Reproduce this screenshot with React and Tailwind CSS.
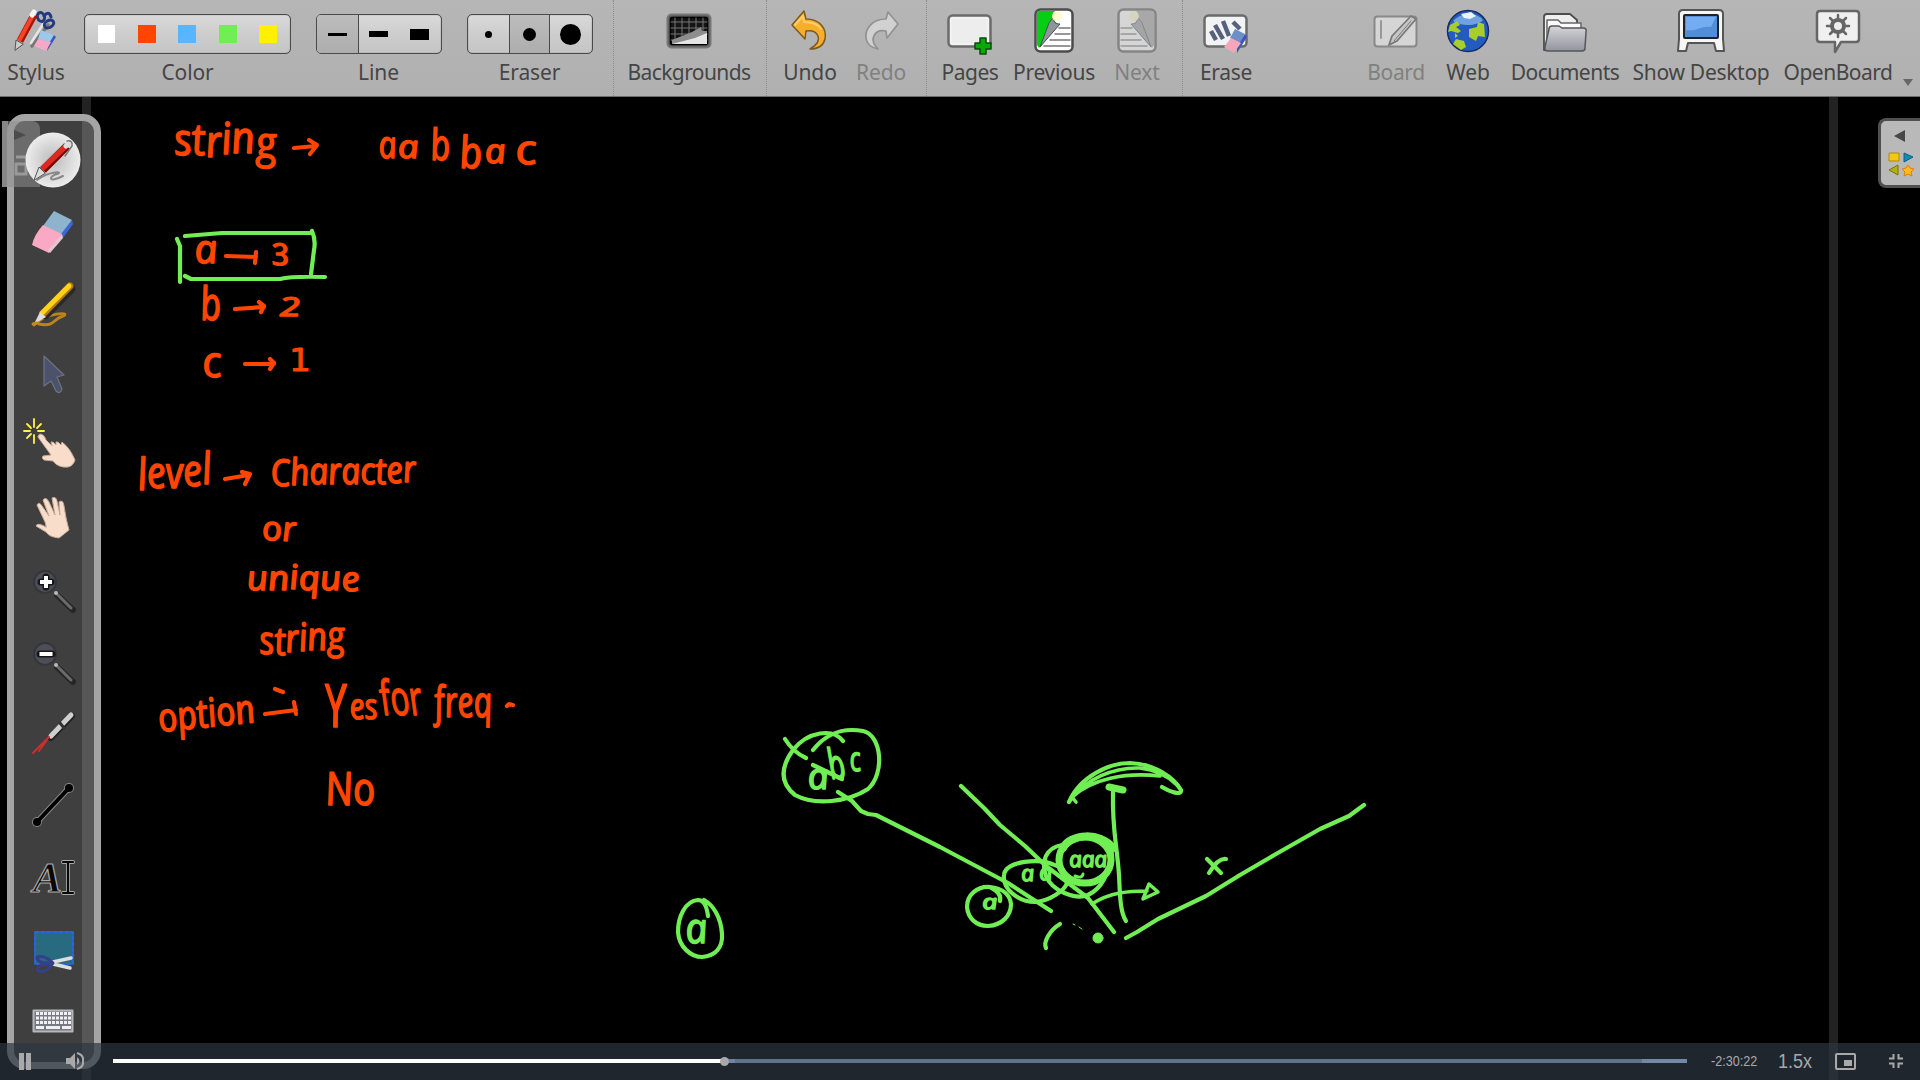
import React from "react";

const LABEL = "font-['Noto_Sans','Open_Sans',sans-serif]";

function Tool({ label, width, dim, tracking = "tracking-[-0.12px]", children }) {
  return (
    <div className={`flex h-full shrink-0 flex-col items-center ${dim ? "opacity-45" : ""}`} style={{ width }}>
      <div className="mt-[7px] flex h-12 items-center justify-center">{children}</div>
      <div className={`mt-[3px] whitespace-nowrap text-[21px] leading-[28px] text-[#454545] ${LABEL} ${tracking}`}>{label}</div>
    </div>
  );
}

const Separator = ({ gap = "" }) => <div className={`h-full w-0 shrink-0 border-l border-dotted border-[#8c8c8c] ${gap}`} />;

const Icon = ({ children, size = "size-12" }) => (
  <svg viewBox="0 0 48 48" className={`${size} shrink-0 overflow-visible`} fill="none" strokeLinecap="round" strokeLinejoin="round">
    {children}
  </svg>
);

const Group = ({ children, width }) => (
  <div
    className={`flex h-10 overflow-hidden rounded-[5px] border border-[#4a4a4a] bg-linear-to-b from-[#dadada] via-[#cdcdcd] to-[#c5c5c5] shadow-[inset_0_0_1px_#555] ${width}`}
  >
    {children}
  </div>
);

const StylusIcon = () => (
  <Icon>
    <path d="M36 18 L20 39" stroke="#777" strokeWidth="3.500" />
    <path d="M33 14 L19 36" stroke="#e5e5e5" strokeWidth="2.500" />
    <g strokeWidth="3" stroke="#24397e">
      <ellipse cx="29" cy="10" rx="3.500" ry="4.500" transform="rotate(-20 29 10)" />
      <ellipse cx="37" cy="17" rx="5" ry="3.500" transform="rotate(-30 37 17)" />
      <path d="M32 9 Q37 3 39 10" />
    </g>
    <path d="M22 8 L8 34" stroke="#a91500" strokeWidth="7" strokeLinecap="butt" />
    <path d="M21 8 L7 34" stroke="#f4442a" strokeWidth="4" strokeLinecap="butt" />
    <path d="M22 5 L20 8" stroke="#f4f4f4" strokeWidth="5" />
    <path d="M3 43 L4 33 L11 37 Z" fill="#ccc" stroke="#555" />
    <path d="M29 23 L42 28 L39 35 L26 32 Z" fill="#9ec8ea" />
    <path d="M42 28 L44 30 L35 44 L36 38 Z" fill="#3858c8" />
    <path d="M26 32 L39 35 L34 44 L22 39 Z" fill="#f5a9c7" />
  </Icon>
);

const BackgroundIcon = () => (
  <Icon>
    <rect x="2.5" y="7.5" width="43" height="33" rx="4" fill="#555" stroke="#777" strokeWidth="2" />
    <rect x="5.5" y="10.500" width="37" height="27" rx="2" fill="#151515" stroke="#000" strokeWidth="1.5" />
    <path d="M10 11V36M17 11V36M24 11V36M31 11V36M38 11V36M6 15H42M6 21H42M6 27H42M6 33H42" stroke="#777" strokeWidth="1" />
    <path d="M7 33 L27 25 L36 20 L37 24 L42 24 V37 H7 Z" fill="#8d8d8d" />
    <path d="M7 37 L30 31 L42 26 V37 Z" fill="#e5e5e5" />
  </Icon>
);

const UndoIcon = () => (
  <Icon>
    <path d="M6 18 L18 4 L20 12 C34 12 41 22 39 32 C37 40 31 42 24 42 C31 38 34 34 32 29 C30 24 26 23 20 24 L19 32 Z" fill="#f7ae2b" stroke="#7b5b20" strokeWidth="1.5" />
    <path d="M9 18 L17 9 L18 15 C26 15 32 17 35 22" stroke="#ffce6c" strokeWidth="2" />
  </Icon>
);

const RedoIcon = () => (
  <Icon>
    <path d="M41 17 L31 5 L29 12 C15 12 8 22 9 31 C10 38 16 41 21 42 C16 37 15 33 17 29 C19 24 23 23 29 24 L30 31 Z" fill="#f4f4f4" stroke="#696969" strokeWidth="1.7" />
  </Icon>
);

const PagesIcon = () => (
  <Icon>
    <rect x="2.500" y="8.500" width="42" height="31" rx="4" fill="#f2f2f2" stroke="#6b6b6b" strokeWidth="2.500" />
    <rect x="6" y="12" width="35" height="24" rx="1" fill="#ededed" />
    <path d="M34 31h6v5h5v6h-5v5h-6v-5h-5v-6h5z" fill="#09a909" stroke="#064e06" strokeWidth="1.500" />
  </Icon>
);

const TurnedPageIcon = ({ mirrored, accent }) => (
  <Icon>
    <g transform={mirrored ? "matrix(-1 0 0 1 48 0)" : undefined}>
      <rect x="5.500" y="2.500" width="37" height="42" rx="5" fill="#fff" stroke="#4c4c4c" strokeWidth="2.500" />
      <path d="M8 4 H25 C21 8 23 14 28 17 L9 41 L7 38 V6 Z" fill={accent} />
      <path d="M24 10 C23 15 25 17 30 17 L10 40 L19 16 Z" fill="#8f959b" stroke="#4a4f55" strokeWidth="1" />
      <path d="M24 5 C20 9 23 15 28 14 C33 14 34 6 29 4 Z" fill="#fffbd0" />
      <path d="M29 21H40M25 27H40M20 33H40M14 39H40" stroke="#777" strokeWidth="1.500" />
    </g>
  </Icon>
);

const EraseIcon = () => (
  <Icon>
    <rect x="2.500" y="8.500" width="42" height="31" rx="4" fill="#f1f3f5" stroke="#6b6b6b" strokeWidth="2.500" />
    <path d="M9 24 L14 33 M13 18 L21 32 M21 14 L27 29 M31 15 L38 22" stroke="#56617c" strokeWidth="4.500" strokeLinecap="butt" />
    <path d="M33 22 L43 27 L38 36 L28 31 Z" fill="#6d8fc6" />
    <path d="M43 27 L45 30 L35 46 L35 40 Z" fill="#3b57bb" />
    <path d="M29 31 L39 36 L32 46 L22 40 Z" fill="#f4a6bb" />
  </Icon>
);

const BoardIcon = () => (
  <Icon>
    <rect x="2.500" y="9.500" width="42" height="30" rx="3" fill="#fff" stroke="#555" strokeWidth="2" />
    <path d="M9 14V31" stroke="#777" strokeWidth="2" />
    <path d="M39 9 L44 12 L25 34 L17 38 L20 29 Z" fill="#ddd" stroke="#333" strokeWidth="1.800" />
    <path d="M39 14 L22 34" stroke="#333" />
  </Icon>
);

const WebIcon = () => (
  <Icon>
    <circle cx="24" cy="24" r="20.500" fill="#245bc0" stroke="#182d5e" strokeWidth="1.500" />
    <path d="M9 14 C17 6 31 4 39 13 C33 19 18 20 9 14Z" fill="#6fa2e0" />
    <path d="M17 7 L27 5 L32 9 L26 12 L20 11 Z" fill="#e9f4fb" />
    <path d="M6 18 L13 14 L16 18 L12 20 L17 24 L14 26 L7 24 L4 25 Z M12 32 L20 34 L22 40 L17 43 L9 37 Z M25 22 L33 20 L34 15 L40 17 L41 30 L34 29 L32 34 L25 30 Z M11 26 L14 29 L11 31Z" fill="#a8ce2d" />
  </Icon>
);

const DocumentsIcon = () => (
  <Icon>
    <defs>
      <linearGradient id="folder" x1="0" y1="0" x2="0" y2="1"><stop offset="0" stopColor="#d5d5da" /><stop offset="1" stopColor="#93949c" /></linearGradient>
    </defs>
    <path d="M3 43 V10 Q3 7 6 7 H29 L36 13 V43 Z" fill="#eee" stroke="#4d4d4d" strokeWidth="1.800" />
    <path d="M6 43 V13 H17 L20 16 H40 V24" fill="#fafafa" stroke="#666" strokeWidth="1.500" />
    <path d="M8 22 Q8 19 11 19 H18 L21 21 H42 Q46 21 45 25 L44 41 Q44 44 41 44 H7 Q3 44 4 40 Z" fill="url(#folder)" stroke="#55565c" strokeWidth="1.500" />
  </Icon>
);

const DesktopIcon = () => (
  <Icon>
    <path d="M2 7 Q2 3 6 3 H42 Q46 3 46 7 V32 L47 44 H39 L37 36 H11 L9 44 H1 L2 32 Z" fill="#f6f6f6" stroke="#555" strokeWidth="2" />
    <rect x="7" y="8" width="34" height="23" rx="1" fill="#528ed8" stroke="#222" strokeWidth="2" />
    <path d="M9 10 H39 L34 20 C24 18 20 25 9 23 Z" fill="#73acf0" />
  </Icon>
);

const OpenBoardIcon = () => (
  <Icon>
    <path d="M6 4 H42 Q45 4 45 7 V32 Q45 35 42 35 H27 L21 45 V35 H6 Q3 35 3 32 V7 Q3 4 6 4 Z" fill="#f0f0f0" stroke="#666" strokeWidth="2.500" />
    <path d="M24 8V30M13 19H35M16 11L32 27M32 11L16 27" stroke="#666" strokeWidth="2.500" />
    <circle cx="24" cy="19" r="6" fill="#eee" stroke="#666" strokeWidth="4" />
  </Icon>
);

function Toolbar() {
  return (
    <header className="flex h-[97px] w-full items-start border-b border-[#6d6d6d] bg-linear-to-b from-[#b6b6b6] to-[#b0b0b0]">
      <Tool label="Stylus" width={72}><StylusIcon /></Tool>
      <Tool label="Color" width={231}>
        <div className="mt-[6px]">
          <Group width="w-[207px] items-center justify-between px-[13px]">
            <div className="h-[18px] w-[17px] bg-white" />
            <div className="h-[18px] w-[18px] bg-[#ff4500]" />
            <div className="h-[18px] w-[18px] bg-[#5ab5ff]" />
            <div className="h-[18px] w-[18px] bg-[#72ee55]" />
            <div className="h-[18px] w-[18px] bg-[#fff000]" />
          </Group>
        </div>
      </Tool>
      <Tool label="Line" width={151}>
        <div className="mt-[6px]">
          <Group width="w-[126px]">
            <div className="flex w-[42px] items-center justify-center border-r border-[#4a4a4a] bg-linear-to-b from-[#bdbdbd] to-[#adadad]"><div className="h-[3px] w-[19px] bg-black" /></div>
            <div className="flex w-[40px] items-center justify-center"><div className="h-[6px] w-[19px] bg-black" /></div>
            <div className="flex w-[42px] items-center justify-center"><div className="h-[11px] w-[19px] bg-black" /></div>
          </Group>
        </div>
      </Tool>
      <Tool label="Eraser" width={151}>
        <div className="mt-[6px]">
          <Group width="w-[126px]">
            <div className="flex w-[41px] items-center justify-center"><div className="size-[7px] rounded-full bg-black" /></div>
            <div className="flex w-[41px] items-center justify-center border-x border-[#4a4a4a] bg-linear-to-b from-[#bdbdbd] to-[#adadad]"><div className="size-[13px] rounded-full bg-black" /></div>
            <div className="flex w-[41px] items-center justify-center"><div className="size-[21px] rounded-full bg-black" /></div>
          </Group>
        </div>
      </Tool>
      <Separator gap="ml-2" />
      <Tool label="Backgrounds" width={150} tracking="tracking-[-0.6px]"><BackgroundIcon /></Tool>
      <Separator gap="ml-[2px]" />
      <Tool label="Undo" width={86}><UndoIcon /></Tool>
      <Tool label="Redo" width={56} dim><RedoIcon /></Tool>
      <Separator gap="ml-[17px]" />
      <Tool label="Pages" width={86} tracking="tracking-[-0.5px]"><PagesIcon /></Tool>
      <Tool label="Previous" width={82} tracking="tracking-[-0.3px]"><TurnedPageIcon accent="#04cf14" /></Tool>
      <Tool label="Next" width={84} dim><TurnedPageIcon mirrored accent="#999" /></Tool>
      <Separator gap="ml-[3px]" />
      <Tool label="Erase" width={86} tracking="tracking-[-0.3px]"><EraseIcon /></Tool>
      <div className="w-[95px]" />
      <Tool label="Board" width={64} dim tracking="tracking-[-0.4px]"><BoardIcon /></Tool>
      <Tool label="Web" width={80}><WebIcon /></Tool>
      <Tool label="Documents" width={114} tracking="tracking-[-0.5px]"><DocumentsIcon /></Tool>
      <Tool label="Show Desktop" width={158} tracking="tracking-[-0.3px]"><DesktopIcon /></Tool>
      <Tool label="OpenBoard" width={116} tracking="tracking-[-0.5px]"><OpenBoardIcon /></Tool>
      <div className="ml-[7px] mt-[79px] h-0 w-0 border-x-[5px] border-t-[7px] border-x-transparent border-t-[#666]" />
    </header>
  );
}

/* Pen lettering: a single-storey italic face, made upright again and fitted to its width. */
function Ink({ x, y, w, size = 40, turn = 0, skew = 8, thick = 1.5, dy, font = "font-['Open_Sans','Noto_Sans',sans-serif] italic", children }) {
  return (
    <text
      transform={`translate(${x} ${y}) rotate(${turn}) skewX(${skew})`}
      textLength={w}
      lengthAdjust="spacingAndGlyphs"
      fontSize={size}
      strokeWidth={thick}
      dy={dy}
      className={font}
    >
      {children}
    </text>
  );
}

function Whiteboard() {
  return (
    <svg viewBox="0 97 1920 983" className="absolute inset-x-0 top-[97px] h-[983px] w-[1920px]" strokeLinecap="round" strokeLinejoin="round">
      <g fill="#ff4500" stroke="#ff4500">
        <Ink x={176} y={155} w={102} size={44} dy="0 0 2 -3 -1 5">string</Ink>
        <Ink x={380} y={158} w={18} size={38}>a</Ink>
        <Ink x={399} y={158} w={21} size={32}>a</Ink>
        <Ink x={432} y={160} w={20} size={43}>b</Ink>
        <Ink x={461} y={168} w={23} size={44}>b</Ink>
        <Ink x={486} y={163} w={21} size={34}>a</Ink>
        <Ink x={517} y={164} w={21} size={41}>c</Ink>
        <Ink x={196} y={263} w={23} size={40}>a</Ink>
        <Ink x={273} y={265} w={18} size={30} skew={12}>3</Ink>
        <Ink x={202} y={320} w={21} size={46}>b</Ink>
        <Ink x={280} y={316} w={21} size={26} skew={6}>2</Ink>
        <Ink x={204} y={377} w={19} size={43}>c</Ink>
        <Ink x={289} y={371} w={22} size={32} skew={0} thick={0.8} font="font-['DejaVu_Sans',sans-serif]">1</Ink>
        <Ink x={139} y={489} w={75} size={44} dy="1 -2 0 -2 -2">level</Ink>
        <Ink x={272} y={486} w={146} size={37} dy="0 -1 -1 0 0 0 0 -1 -1">Character</Ink>
        <Ink x={263} y={540} w={34} size={34} turn={2}>or</Ink>
        <Ink x={248} y={590} w={113} size={34} dy="0 0 -1 1 0 1">unique</Ink>
        <Ink x={261} y={654} w={86} size={39} dy="0 1 -3 -1 -1 -1">string</Ink>
        <Ink x={161} y={732} w={97} size={40} turn={-6}>option</Ink>
        <Ink x={327} y={727} w={22} size={60}>Y</Ink>
        <Ink x={351} y={719} w={28} size={36}>es</Ink>
        <Ink x={382} y={715} w={42} size={48} font="font-['Open_Sans',sans-serif]">for</Ink>
        <Ink x={436} y={717} w={58} size={43}>freq</Ink>
        <Ink x={327} y={805} w={50} size={46}>No</Ink>
      </g>
      <g fill="none" stroke="#ff4500" strokeWidth="4.200">
        <path d="M294 148 L316 146 M309 140 L317 145 L310 154" />
        <path d="M226 256 L256 257 M256 252 L255 263" />
        <path d="M235 309 L264 307 M259 302 L264 306 L261 312" />
        <path d="M245 364 L274 364 M270 359 L274 363 L270 369" />
        <path d="M225 479 L249 475 M242 472 L250 474 L245 484" />
        <path d="M265 714 L296 710 M294 702 L296 714 M275 689 L283 692" />
        <path d="M507 706 L509 704 L513 705" />
      </g>
      <g fill="none" stroke="#72ee55" strokeWidth="4.200">
        <path d="M177 239 L180 246 V282" />
        <path d="M185 236 L222 233 H312 M312 231 Q316 240 314 250 L311 274 M185 276 L191 279 H280 Q292 276 325 277" />
        <path d="M843 741 C833 728 808 731 793 750 C780 768 780 783 795 795 C815 806 848 802 868 789 C885 774 882 735 863 731 C840 727 825 735 813 750" />
        <path d="M785 739 Q793 752 806 758 M813 765 L842 779" />
        <path d="M838 792 L852 801 L861 811 L868 814 L876 815 L940 847 L1008 883 L1051 911" />
        <path d="M961 786 L984 808 L1000 825 L1025 846 L1046 866 L1088 898 L1114 932" />
        <path d="M708 916 Q706 900 698 900 C685 901 678 917 678 932 C679 947 691 957 702 957 C715 956 723 948 722 934 C721 917 713 905 704 900" />
        <path d="M1000 901 Q1002 893 990 887 C977 886 967 895 967 907 C968 918 976 926 988 926 C1002 925 1011 916 1011 904 C1010 895 1003 888 990 887" />
        <path d="M1057 866 C1040 857 1005 861 1004 875 C1002 890 1020 902 1035 902 C1050 901 1065 890 1067 883" />
        <path d="M1062 845 C1045 848 1041 862 1046 876 C1052 891 1075 900 1088 895 C1103 888 1110 870 1112 850" />
        <ellipse cx="1085" cy="860" rx="26" ry="23" strokeWidth="7" />
        <path d="M1063 848 C1070 834 1100 831 1113 848" strokeWidth="8" />
        <path d="M1075 876 Q1082 879 1083 874" strokeWidth="3" />
        <path d="M1069 802 C1080 776 1110 763 1130 763 C1155 764 1174 778 1181 790 C1182 796 1170 792 1162 787" />
        <path d="M1069 802 C1085 778 1115 767 1140 768 C1158 770 1170 778 1177 785 M1076 802 L1072 797 C1092 779 1125 772 1160 776" strokeWidth="3.600" />
        <path d="M1109 787 L1123 790" strokeWidth="7" />
        <path d="M1113 792 C1112 830 1117 845 1119 875 C1120 895 1120 912 1126 921" />
        <path d="M1126 938 L1137 932 L1158 919 L1206 896 L1240 875 L1276 854 L1320 829 L1349 816 L1364 805" />
        <path d="M1207 859 L1221 873 M1226 859 Q1218 858 1209 873" />
        <path d="M1092 904 C1110 892 1130 891 1147 891 M1149 884 L1158 892 L1143 899 Z" strokeWidth="3.500" />
        <path d="M1060 924 C1050 930 1043 942 1046 948" />
        <circle cx="1098" cy="938" r="5" fill="#72ee55" strokeWidth="1" />
        <path d="M1073 924 L1075 925 M1079 927 L1082 929" strokeWidth="1" />
      </g>
      <g fill="#72ee55" stroke="#72ee55">
        <Ink x={687} y={943} w={22} size={42}>a</Ink>
        <Ink x={809} y={789} w={21} size={36}>a</Ink>
        <Ink x={832} y={779} w={17} size={42} skew={18}>b</Ink>
        <Ink x={851} y={771} w={11} size={34}>c</Ink>
        <Ink x={983} y={909} w={15} size={20}>a</Ink>
        <Ink x={1022} y={881} w={13} size={22}>a</Ink>
        <Ink x={1040} y={880} w={13} size={22}>a</Ink>
        <Ink x={1070} y={867} w={38} size={22}>aaa</Ink>
      </g>
    </svg>
  );
}

const SideTool = ({ children }) => (
  <div className="relative flex h-[71.75px] w-full shrink-0 items-center justify-center">{children}</div>
);

/* The left drawer handle, seen through the translucent tool palette. */
const DrawerHandle = () => (
  <div className="absolute left-[2px] top-[121px] h-[66px] w-[38px] rounded-tr-[8px] bg-[#8f8f8f]/55">
    <svg viewBox="0 0 38 66" className="h-full w-full">
      <path d="M12 9 L24 14 L12 19 Z" fill="#4b4b4b" />
      <path d="M14 36 H30 M14 43 H24 V53 H14 Z M30 43 V53" fill="none" stroke="#999" strokeWidth="3" />
    </svg>
  </div>
);

function Sidebar() {
  return (
    <>
      <div className="absolute left-[2px] top-[121px] h-[66px] w-[6px] bg-[#7c7c7c]" />
      <div className="absolute left-[7px] top-[114px] h-[955px] w-[94px] rounded-[18px] border-[7px] border-[#a5a5a5] bg-linear-to-r from-[#3f3f3f] from-85% to-[#575757] to-85%" />
      <DrawerHandle />
      <aside className="absolute left-[7px] top-[114px] flex h-[955px] w-[94px] flex-col pl-[7px] pr-[9px] pt-[10px]">
        <SideTool>
          <svg viewBox="0 0 56 56" className="size-14 shrink-0" strokeLinecap="round">
            <defs>
              <radialGradient id="disc"><stop offset="0" stopColor="#bcbcbc" /><stop offset="1" stopColor="#ececec" /></radialGradient>
            </defs>
            <circle cx="28" cy="28" r="27.500" fill="url(#disc)" />
            <path d="M12 48 C26 38 39 40 32 42 C24 44 22 52 38 44" fill="none" stroke="#888" strokeWidth="2" />
            <path d="M18 38 L42 14" stroke="#6f0808" strokeWidth="8" strokeLinecap="butt" />
            <path d="M17 37 L41 14" stroke="#df2820" strokeWidth="5.500" strokeLinecap="butt" />
            <path d="M41 14 L45 11" stroke="#ddd" strokeWidth="5" />
            <path d="M42 9 Q48 8 47 14 L40 24" fill="none" stroke="#777" strokeWidth="1.500" />
            <path d="M9 48 L14 35 L20 41 Z" fill="#ddd" stroke="#555" />
          </svg>
        </SideTool>
        <SideTool>
          <Icon>
            <path d="M25 3 L43 12 L33 27 L14 18 Z" fill="#8fb3cc" />
            <path d="M43 12 L44 16 L34 30 L32 26 Z" fill="#3c66de" />
            <path d="M14 17 L33 26 L20 45 L3 37 Q5 27 14 17 Z" fill="#f9a9c3" />
            <path d="M33 26 L34 30 L21 45 L19 42 Z" fill="#e7c5cf" />
          </Icon>
        </SideTool>
        <SideTool>
          <Icon>
            <path d="M5 46 C17 33 43 33 34 37 C23 40 27 48 10 45" stroke="#bd8419" strokeWidth="3" />
            <path d="M42 10 L16 36" stroke="#292929" strokeWidth="9" />
            <path d="M41 7 L14 35" stroke="#b47a06" strokeWidth="7" />
            <path d="M40 7 L13 34" stroke="#ffd313" strokeWidth="5" />
            <path d="M5 45 L11 33 L17 38 Z" fill="#ddd" />
            <path d="M4 45 L8 44" stroke="#c78b16" strokeWidth="3" />
          </Icon>
        </SideTool>
        <SideTool>
          <Icon>
            <path d="M15 5 L35 24 L28 26 L33 38 Q31 44 27 40 L22 30 L15 35 Z" fill="#4b5269" stroke="#6c7386" strokeWidth="1.200" />
          </Icon>
        </SideTool>
        <SideTool>
          <Icon>
            <path d="M5 -2V6M5 -18V-10M-5 -6H1M9 -6H15M-2 -13L2 -9M12 -13L8 -9M-2 1L2 -3" stroke="#fff347" strokeWidth="1.800" transform="translate(0 14)" />
            <path d="M11 11 Q15 11 17 17 L23 23 L22 19 Q24 18 27 22 L27 19 Q29 18 32 22 L33 19 Q41 25 46 37 Q44 43 39 44 Q29 45 24 38 L15 37 Q12 35 14 33 L22 32 L9 14 Z" fill="#f8ddca" stroke="#c6aa98" />
          </Icon>
        </SideTool>
        <SideTool>
          <Icon>
            <path d="M16 27 L8 10 Q10 6 13 11 L20 21 L14 5 Q17 1 20 7 L26 20 L23 3 Q27 1 28 6 L31 20 L30 7 Q34 4 35 11 Q37 25 40 35 L30 43 Q20 42 17 37 L7 31 Q8 27 17 32 Z" fill="#f8ddca" stroke="#c6aa98" />
          </Icon>
        </SideTool>
        {["in", "out"].map((kind) => (
          <SideTool key={kind}>
            <Icon>
              <circle cx="16" cy="16" r="11" fill="#4d4e56" stroke="#34363e" strokeWidth="2" />
              <path d="M28 29 L44 44" stroke="#262626" strokeWidth="6" />
              <path d="M28 28 L42 42" stroke="#6a6a6a" strokeWidth="3" />
              <circle cx="27" cy="27" r="2" fill="#b8b8b8" />
              <path d={kind === "in" ? "M17 11V21M12 16H22" : "M11 16H23"} stroke="#161616" strokeWidth="7" />
              <path d={kind === "in" ? "M17 10V22M11 16H23" : "M10.500 16H23.500"} stroke="#fff" strokeWidth="4" strokeLinecap="butt" />
            </Icon>
          </SideTool>
        ))}
        <SideTool>
          <Icon>
            <path d="M43 6 L22 28" stroke="#222" strokeWidth="6" />
            <path d="M42 5 L22 26" stroke="#cfcfcf" strokeWidth="5" />
            <path d="M31 13 L35 18" stroke="#333" strokeWidth="3" />
            <path d="M20 27 L4 43 M18 30 L10 41" stroke="#c0342f" strokeWidth="2" />
          </Icon>
        </SideTool>
        <SideTool>
          <Icon>
            <path d="M8 40 L40 6" stroke="#888" strokeWidth="6" />
            <circle cx="8" cy="40" r="5" fill="#888" /><circle cx="40" cy="6" r="5" fill="#888" />
            <path d="M8 40 L40 6" stroke="#000" strokeWidth="4" />
            <circle cx="8" cy="40" r="4" fill="#000" /><circle cx="40" cy="6" r="4" fill="#000" />
          </Icon>
        </SideTool>
        <SideTool>
          <Icon>
            <text x="4" y="39" fontSize="43" textLength="29" lengthAdjust="spacingAndGlyphs" fill="#080808" stroke="#aaa" strokeWidth="1.200" className="font-['Liberation_Serif',serif] font-bold italic">A</text>
            <path d="M34 9 H44 M39 9 V40 M34 40 H44" stroke="#aaa" strokeWidth="4" />
            <path d="M34 9 H44 M39 9 V40 M34 40 H44" stroke="#080808" strokeWidth="2.200" />
          </Icon>
        </SideTool>
        <SideTool>
          <Icon>
            <rect x="6" y="7" width="38" height="32" fill="#286b80" stroke="#2567d8" strokeWidth="2" strokeDasharray="4 2" />
            <path d="M24 37 L42 33 M24 39 L41 43" stroke="#ddd" strokeWidth="3.500" />
            <path d="M8 32 Q16 30 24 38 Q16 49 9 46 Q7 39 20 39 M20 38 Q8 38 8 32" stroke="#343f88" strokeWidth="3" />
          </Icon>
        </SideTool>
        <SideTool>
          <Icon>
            <rect x="4.500" y="13.500" width="39" height="21" fill="#777982" stroke="#b7b7bb" strokeWidth="2" />
            <path d="M7 16.500H42M7 21H42M7 25.500H42" stroke="#f0f0f4" strokeWidth="3" strokeDasharray="3 1" strokeLinecap="butt" />
            <path d="M7 30.500H15M17 30.500H31M33 30.500H42" stroke="#f0f0f4" strokeWidth="3" strokeLinecap="butt" />
          </Icon>
        </SideTool>
      </aside>
    </>
  );
}

const LibraryTab = () => (
  <div className="absolute right-0 top-[118px] h-[70px] w-[42px] rounded-l-[8px] border-y-[3px] border-l-[3px] border-[#505050] bg-[#b9b9b9]">
    <svg viewBox="0 0 39 64" className="h-full w-full">
      <path d="M24 9 V21 L13 15 Z" fill="#484848" />
      <path d="M8 32 H18 V40 H8 Z" fill="#f0c819" stroke="#b08d00" />
      <path d="M23 32 L32 36 L23 41 Z" fill="#108bb5" stroke="#0b6182" />
      <path d="M17 44 V54 L8 49 Z" fill="#b3ad16" stroke="#777700" />
      <path d="M27 44 L29 47 L33 48 L30 51 L31 55 L27 53 L23 55 L24 51 L21 48 L25 47 Z" fill="#fbbd22" stroke="#e67b00" />
    </svg>
  </div>
);

function Player() {
  return (
    <footer className="absolute inset-x-0 bottom-0 flex h-[37px] items-center bg-[#2d3641]/70 pb-px text-[#a9a9a9]">
      <div className="ml-[19px] mt-px flex h-[17px] w-3 justify-between"><i className="w-[5px] bg-current" /><i className="w-[5px] bg-current" /></div>
      <svg viewBox="0 0 18 18" className="ml-[35px] size-[18px]" fill="currentColor">
        <path d="M0 6 H4 L9 1 V17 L4 12 H0 Z M11 5 Q16 9 11 13 Z" />
        <path d="M11 1 Q18 3 17 9 Q18 15 11 17" fill="none" stroke="currentColor" strokeWidth="2" />
      </svg>
      <div className="ml-[29px] flex h-1 w-[1574px] items-center bg-[#61738a]">
        <div className="h-full w-[611px] bg-white" />
        <div className="-ml-[4px] h-[9px] w-[9px] shrink-0 rounded-full bg-[#a9a9a9]" />
        <div className="h-full w-[6px] bg-[#6d82a5]" />
        <div className="ml-auto h-full w-[45px] bg-[#7189a5]" />
      </div>
      <div className="ml-[24px] w-[46px] whitespace-nowrap font-['Liberation_Sans',sans-serif] text-[12.6px] leading-none [transform:scaleY(1.14)]">-2:30:22</div>
      <div className="ml-[21px] w-[35px] whitespace-nowrap font-['Liberation_Sans',sans-serif] text-[18px] leading-none [transform:scaleY(1.1)]">1.5x</div>
      <div className="ml-[22px] flex h-[17px] w-[21px] items-end justify-end rounded-[2px] border-2 border-current pb-[2px] pr-[2px]"><div className="h-[6px] w-2 bg-current" /></div>
      <svg viewBox="0 0 14 14" className="ml-[33px] size-[14px]" fill="none" stroke="currentColor" strokeWidth="2">
        <path d="M0 4.500H4.500V0 M9.500 0V4.500H14 M0 9.500H4.500V14 M14 9.500H9.500V14" />
      </svg>
    </footer>
  );
}

export default function App() {
  return (
    <div className="relative h-[1080px] w-[1920px] overflow-hidden bg-black">
      <Toolbar />
      <div className="flex h-[983px] justify-between pl-[82px] pr-[82px]">
        <div className="w-[9px] bg-[#222]" />
        <div className="w-[9px] bg-[#222]" />
      </div>
      <Whiteboard />
      <Sidebar />
      <LibraryTab />
      <Player />
    </div>
  );
}
